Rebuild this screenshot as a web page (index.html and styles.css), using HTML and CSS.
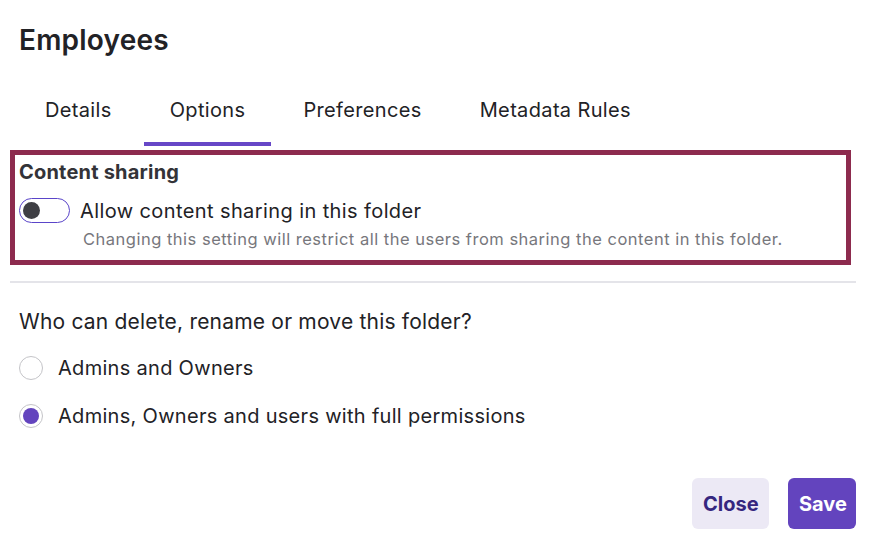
FILE: index.html
```html
<!DOCTYPE html>
<html>
<head>
<meta charset="utf-8">
<link rel="stylesheet" href="styles.css">
</head>
<body>
<div class="dialog">
  <h1 class="title">Employees</h1>
  <nav class="tabs">
    <div class="tab">Details</div>
    <div class="tab active">Options</div>
    <div class="tab">Preferences</div>
    <div class="tab">Metadata Rules</div>
  </nav>
  <section class="highlight">
    <div class="section-title">Content sharing</div>
    <div class="toggle-row">
      <span class="toggle"><span class="knob"></span></span>
      <span class="toggle-label">Allow content sharing in this folder</span>
    </div>
    <div class="hint">Changing this setting will restrict all the users from sharing the content in this folder.</div>
  </section>
  <hr class="divider">
  <div class="question">Who can delete, rename or move this folder?</div>
  <div class="radios">
    <label class="radio-row"><span class="radio"></span><span>Admins and Owners</span></label>
    <label class="radio-row"><span class="radio checked"></span><span>Admins, Owners and users with full permissions</span></label>
  </div>
  <div class="actions">
    <button class="btn btn-secondary">Close</button>
    <button class="btn btn-primary">Save</button>
  </div>
</div>
</body>
</html>
```
FILE: styles.css
```css
* { box-sizing: border-box; }
html, body { margin: 0; padding: 0; background: #fff; }
body {
  font-family: Inter, "Noto Sans", sans-serif;
  color: #1f1f24;
  width: 876px;
  height: 548px;
  overflow: hidden;
}
.dialog {
  display: flex;
  flex-direction: column;
  padding: 24px 20px 0 10px;
}
.title {
  margin: 0 0 0 9px;
  font-size: 28px;
  line-height: 33px;
  font-weight: 600;
  letter-spacing: 0.2px;
  color: #222226;
}
.tabs {
  display: flex;
  gap: 6px;
  margin: 41px 0 0 9px;
}
.tab {
  padding: 0 26px 20px;
  font-size: 20px;
  line-height: 24px;
  letter-spacing: 0.35px;
  color: #222226;
  border-bottom: 4px solid transparent;
}
.tab.active { border-bottom-color: #6747c7; }
.highlight {
  margin-top: 4px;
  width: 841px;
  height: 115px;
  border: 5px solid #8d2b4e;
  padding: 5px 0 0 4px;
}
.section-title {
  font-size: 20px;
  line-height: 24px;
  font-weight: 650;
  letter-spacing: 0.2px;
  color: #333338;
}
.toggle-row {
  display: flex;
  align-items: center;
  gap: 10px;
  margin-top: 14px;
}
.toggle {
  display: flex;
  align-items: center;
  width: 51px;
  height: 25px;
  border: 1px solid #5a45c9;
  border-radius: 13px;
  padding-left: 3px;
}
.knob {
  width: 17px;
  height: 17px;
  border-radius: 50%;
  background: #3f3f44;
}
.toggle-label {
  font-size: 20px;
  line-height: 24px;
  letter-spacing: 0.4px;
  color: #222226;
}
.hint {
  margin: 6px 0 0 64px;
  font-size: 16.5px;
  line-height: 20px;
  letter-spacing: 0.5px;
  color: #77777c;
}
.divider {
  margin: 16px 0 0 0;
  width: 846px;
  border: 0;
  border-top: 2px solid #e4e4e9;
}
.question {
  margin: 26px 0 0 9px;
  font-size: 21px;
  line-height: 25px;
  letter-spacing: 0.2px;
  color: #222226;
}
.radios {
  display: flex;
  flex-direction: column;
  gap: 24px;
  margin: 22px 0 0 9px;
}
.radio-row {
  display: flex;
  align-items: center;
  gap: 15px;
  font-size: 20px;
  line-height: 24px;
  letter-spacing: 0.3px;
  color: #222226;
}
.radio {
  width: 24px;
  height: 24px;
  border-radius: 50%;
  border: 1px solid #c4c4c8;
  display: flex;
  align-items: center;
  justify-content: center;
}
.radio.checked::after {
  content: "";
  width: 16px;
  height: 16px;
  border-radius: 50%;
  background: #6344be;
}
.actions {
  display: flex;
  justify-content: flex-end;
  gap: 19px;
  margin-top: 50px;
}
.btn {
  height: 51px;
  border: 0;
  border-radius: 6px;
  font-family: Inter, "Noto Sans", sans-serif;
  font-size: 20px;
  font-weight: 700;
  padding: 0 11px;
}
.btn-secondary { background: #ece9f5; color: #35267f; width: 77px; }
.btn-primary { background: #6344be; color: #fff; width: 68px; }
```
